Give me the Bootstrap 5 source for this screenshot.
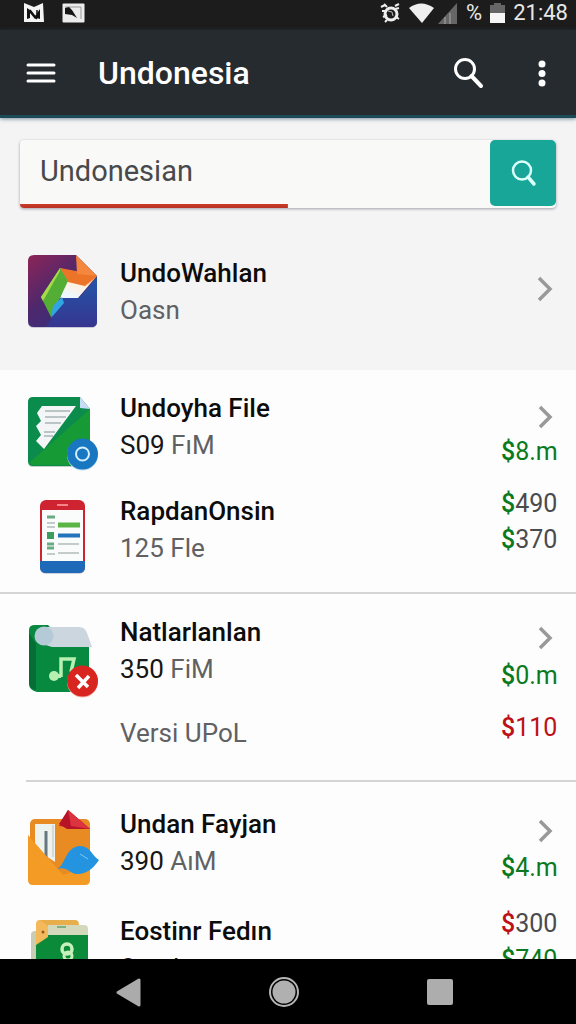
<!DOCTYPE html>
<html lang="id">
<head>
<meta charset="utf-8">
<meta name="viewport" content="width=device-width, initial-scale=1">
<title>Undonesia</title>
<link rel="stylesheet" href="https://cdn.jsdelivr.net/npm/bootstrap@5.3.0/dist/css/bootstrap.min.css">
<style>
  body { font-family: Roboto, "Liberation Sans", sans-serif; background: #fdfdfd; color: #0c0c0c; }
  svg { display: block; flex: none; }
  .status-bar { height: 30px; background: #1d1c1c; color: #e8e8e8; padding: 0 8px 4px 22px; font-size: 22px; line-height: 26px; }
  .app-bar { height: 88px; background: #252b2f; border-bottom: 3px solid #1b4b57; box-shadow: 0 1px 4px rgba(40, 80, 100, .6); padding: 0 20px 0 24px; z-index: 1; }
  .app-bar h1 { font-size: 32px; line-height: 40px; font-weight: 500; color: #fff; margin-left: 40px; }
  .app-bar button, .nav-keys button { background: none; border: 0; padding: 0; }
  .more-key { margin-left: 42px; }
  .top-area { background: #f4f4f5; padding: 22px 20px 31px; }
  .search-box { height: 68px; background: #f9f9f7; border-radius: 4px; box-shadow: 0 1px 3px rgba(60, 60, 80, .45); margin-bottom: 43px; }
  .search-box input { background: linear-gradient(#cb3c28, #b83224) left bottom / 57% 4px no-repeat; border: 0; outline: 0; font-size: 29px; color: #48494b; padding: 0 20px 4px; min-width: 0; border-radius: 4px 0 0 4px; }
  .search-box button { width: 66px; height: 66px; background: #18a699; border: 0; border-radius: 5px; }
  .entry { display: flex; align-items: flex-start; gap: 16px; padding-left: 4px; color: inherit; text-decoration: none; }
  .entry-name { font-size: 26px; line-height: 36px; font-weight: 500; margin: 0; }
  .entry-sub { font-size: 26px; line-height: 38px; margin: 0; color: #606163; }
  .entry-sub b { font-weight: 400; color: #161616; }
  .entry-side { font-size: 25px; line-height: 36px; color: #4b4b4d; width: 55px; white-space: nowrap; }
  .entry-side svg { height: 36px; margin-left: auto; }
  .entry-head .entry-side { padding-top: 8px; }
  .entry-more .entry-text { padding-top: 7px; }
  .entry-plain { padding-left: 100px; }
  .entry-side b { font-weight: 500; }
  .up { color: #0b7a1e; }
  .down { color: #bd1118; }
  .file-group { padding: 20px 20px 18px; display: grid; gap: 8px; }
  .file-group-loose { padding: 24px 20px 18px; gap: 12px; }
  .rule-full { border-bottom: 2px solid #d3d4d6; }
  .rule-inset { height: 2px; background: #d3d4d6; margin-left: 26px; }
  .nav-keys { height: 65px; background: #000; padding: 0 58px 0 50px; }
</style>
</head>
<body>
<div class="d-flex flex-column vh-100 overflow-hidden">
  <div class="status-bar d-flex align-items-center flex-shrink-0">
    <svg width="24" height="22" viewBox="0 0 24 22"><path d="M2 1l10 4 9-4 1 19H2z" fill="#f4f4f4"/><path d="M5 6l3 2 5 6 5-7v10l-3-1-2 1-5-6v5l-3 1z" fill="#111"/><path d="M8 8l7 9M15 8v4" fill="none" stroke="#111" stroke-width="1.500"/></svg>
    <svg class="ms-3" width="24" height="20" viewBox="0 0 24 20"><rect x=".5" y=".5" width="22" height="19" rx="1" fill="#ececec"/><path d="M3 4h16v12" fill="none" stroke="#999"/><path d="M3 5l4-1 3 3 5 8-5-3-7-1z" fill="#161616"/></svg>
    <svg class="ms-auto" width="21" height="22" viewBox="0 0 21 22"><circle cx="11" cy="12" r="6" fill="none" stroke="#eee" stroke-width="3"/><path d="M1 5l4-2M4 2l3 3M15 4l4-2M15 7l4-1M2 9h4M3 15l4-2M16 15l3 2M7 18l-2 2" stroke="#eee" stroke-width="2"/><path d="M8 9l4 1 1 4" stroke="#bbb" fill="none"/></svg>
    <svg class="ms-2" width="25" height="20" viewBox="0 0 25 20"><path d="M0 5Q12-4 25 5L13 20z" fill="#eee"/></svg>
    <svg class="ms-1" width="20" height="21" viewBox="0 0 20 21"><path d="M19 0v21H0z" fill="#666"/><path d="M7 14v7M12 10v11" stroke="#aaa"/></svg>
    <span class="ms-2">%</span>
    <svg class="ms-2" width="15" height="20" viewBox="0 0 15 20"><path d="M4 0h7v2h4v9H0V2h4z" fill="#666"/><path d="M0 10h15v10H0z" fill="#f6f6f6"/></svg>
    <span class="ms-2">21:48</span>
  </div>

  <header class="app-bar d-flex align-items-center flex-shrink-0">
    <button type="button" aria-label="Menu"><svg width="34" height="24" viewBox="0 0 34 24"><path d="M4 4h26M4 12h26M4 20h26" stroke="#fff" stroke-width="3" stroke-linecap="round"/></svg></button>
    <h1 class="mb-0">Undonesia</h1>
    <button type="button" class="ms-auto" aria-label="Search"><svg width="34" height="34" viewBox="0 0 34 34"><circle cx="13" cy="13" r="9.500" fill="none" stroke="#fff" stroke-width="3"/><path d="M19.500 20l9.500 10" stroke="#fff" stroke-width="4" stroke-linecap="round"/></svg></button>
    <button type="button" class="more-key" aria-label="More options"><svg width="28" height="30" viewBox="0 0 28 30"><g fill="#fff"><circle cx="14" cy="6" r="3.500"/><circle cx="14" cy="15.500" r="3.500"/><circle cx="14" cy="25" r="3.500"/></g></svg></button>
  </header>

  <main class="flex-grow-1 overflow-hidden">
    <section class="top-area">
      <form class="search-box d-flex" role="search">
        <input class="flex-grow-1" type="text" value="Undonesian" aria-label="Search files">
        <button type="button" class="d-flex align-items-center justify-content-center" aria-label="Search"><svg width="28" height="28" viewBox="0 0 28 28"><circle cx="13" cy="11.500" r="9" fill="none" stroke="#dcfffa" stroke-width="2.500"/><path d="M19 18l6 7" stroke="#dcfffa" stroke-width="3.500" stroke-linecap="round"/></svg></button>
      </form>
      <a class="entry" href="#">
        <svg width="80" height="88" viewBox="24 251 80 88">
          <defs><linearGradient id="dusk" x1="0" y1="0" x2=".8" y2="1"><stop offset="0" stop-color="#8d2457"/><stop offset=".5" stop-color="#4d286d"/><stop offset="1" stop-color="#303183"/></linearGradient><linearGradient id="sea" x1="0" y1="0" x2="0" y2="1"><stop stop-color="#2257a8"/><stop offset="1" stop-color="#36358f"/></linearGradient><linearGradient id="glow" x1=".8" y1="0" x2=".4" y2="1"><stop stop-color="#f06b21"/><stop offset=".6" stop-color="#fff0e0"/><stop offset="1" stop-color="#eef9ff"/></linearGradient></defs>
          <path d="M34 256h42l21 22v44q0 6-6 6H34q-6 0-6-6v-60q0-6 6-6z" fill="#c8c8d6"/>
          <path d="M34 255h42l21 21v45q0 6-6 6H34q-6 0-6-6v-60q0-6 6-6z" fill="url(#dusk)"/>
          <path d="M97 277v44q0 6-6 6H46l6-9 11-20h16z" fill="url(#sea)"/>
          <path d="M60 268l16 6 21 2-19 22H60l6-17z" fill="url(#glow)"/>
          <path d="M60 268l16 3 21 5-12 10-17-4z" fill="#ec7428"/>
          <path d="M60 268l8 13-17 36-10-20z" fill="#54ad34"/><path d="M60 268l-19 29 2 4 17-30z" fill="#a8d84c"/>
          <path d="M62 297l2 6-13 15 2-12z" fill="#30a5e5"/>
          <path d="M76 255l21 21-20-2z" fill="#f4873d"/>
        </svg>
        <div class="entry-text flex-grow-1 pt-1">
          <h2 class="entry-name">UndoWahlan</h2>
          <p class="entry-sub">Oasn</p>
        </div>
        <div class="entry-side pt-3 mt-1"><svg width="20" height="36" viewBox="0 0 20 36"><path d="M3 7l11 11L3 29" fill="none" stroke="#999" stroke-width="3.500"/></svg></div>
      </a>
    </section>

    <section class="file-group rule-full">
      <a class="entry entry-head" href="#">
        <svg width="80" height="88" viewBox="24 390 80 88">
          <path d="M33 398h47l10 12v52q0 5-5 5H33q-5 0-5-5v-59q0-5 5-5z" fill="#bcd3c5"/>
          <path d="M33 397h47l10 12v52q0 5-5 5H33q-5 0-5-5v-59q0-5 5-5z" fill="#0b8c4c"/>
          <path d="M90 409v52q0 4-4 4H33l-4-2z" fill="#159a35"/>
          <path d="M80 397l10 12-10-1z" fill="#c7dcf5"/>
          <path d="M42 406h34l-32 43-8-8 5-6-5-9 5-5-4-8z" fill="#f3f5f6"/>
          <path d="M45 411h25M45 417h21M45 423h16M44 432h11M44 436h9" stroke="#a9b5b8" stroke-width="1.500"/>
          <circle cx="82.500" cy="455" r="15.500" fill="#c4dded"/><circle cx="82.500" cy="454" r="15.500" fill="#1977c2"/><circle cx="82.500" cy="454" r="6.500" fill="none" stroke="#d2efff" stroke-width="2"/>
        </svg>
        <div class="entry-text flex-grow-1">
          <h2 class="entry-name">Undoyha File</h2>
          <p class="entry-sub"><b>S09</b> FıM</p>
        </div>
        <div class="entry-side"><svg width="20" height="36" viewBox="0 0 20 36"><path d="M4 9l10 10L4 29" fill="none" stroke="#999" stroke-width="3.500"/></svg><span class="up"><b>$</b>8.m</span></div>
      </a>
      <div class="entry entry-more">
        <svg width="80" height="88" viewBox="24 486 80 88">
          <rect x="40" y="501" width="45" height="73" rx="6" fill="#ccd2da"/>
          <rect x="40" y="500" width="45" height="73" rx="6" fill="#ce2431"/>
          <path d="M40 561h45v6q0 6-6 6H46q-6 0-6-6z" fill="#1e69b8"/>
          <path d="M42 510h41v51H42z" fill="#fafcfc"/><path d="M57 505h11" stroke="#ffa5a5" stroke-width="1.500"/>
          <path d="M47 517h8M47 544h7M47 548h7" stroke="#69aa83" stroke-width="3"/><path d="M47 523h8M47 527h8M47 554h8M58 544h21M58 553h21" stroke="#c4cbcb" stroke-width="2"/>
          <path d="M58 525h22" stroke="#5bb545" stroke-width="5"/><path d="M58 535.500h22" stroke="#2374bb" stroke-width="4"/><rect x="47" y="532" width="7" height="7" fill="#3c9b5f"/>
        </svg>
        <div class="entry-text flex-grow-1">
          <h2 class="entry-name">RapdanOnsin</h2>
          <p class="entry-sub">125 Fle</p>
        </div>
        <div class="entry-side"><div><b class="up">$</b>490</div><div><b class="up">$</b>370</div></div>
      </div>
    </section>

    <section class="file-group pb-4">
      <a class="entry entry-head" href="#">
        <svg width="80" height="88" viewBox="24 614 80 88">
          <path d="M29 630q0-5 6-5h13l8 8 33 10v45q0 4-4 4H37q-8-2-8-8z" fill="#07893f"/><path d="M29 633l7 11v46q-6-1-7-7z" fill="#046e35"/>
          <path d="M41 627h38q6 0 8 6l5 14H52l-13-4z" fill="#cbd6df"/><circle cx="44" cy="636" r="9.500" fill="#b4cbd7"/>
          <path d="M61 677v-18h13l-3 13" fill="none" stroke="#b7f0b0" stroke-width="3.500"/><circle cx="54" cy="676" r="5" fill="#b7f0b0"/><path d="M54 676h7" stroke="#b7f0b0" stroke-width="4"/>
          <circle cx="82.500" cy="682" r="15.500" fill="#f4b5ac"/><circle cx="82.500" cy="681" r="15.500" fill="#d9251f"/><path d="M76 675l12 12M89 676l-11 12" stroke="#fff" stroke-width="3.500"/>
        </svg>
        <div class="entry-text flex-grow-1">
          <h2 class="entry-name">Natlarlanlan</h2>
          <p class="entry-sub"><b>350</b> FiM</p>
        </div>
        <div class="entry-side"><svg width="20" height="36" viewBox="0 0 20 36"><path d="M4 6l10 10L4 26" fill="none" stroke="#999" stroke-width="3.500"/></svg><span class="up"><b>$</b>0.m</span></div>
      </a>
      <div class="entry entry-plain pb-1">
        <p class="entry-sub flex-grow-1 pt-1">Versi UPoL</p>
        <div class="entry-side down"><b>$</b>110</div>
      </div>
    </section>
    <div class="rule-inset"></div>

    <section class="file-group file-group-loose">
      <a class="entry entry-head" href="#">
        <svg width="80" height="88" viewBox="24 806 80 88">
          <rect x="30" y="819" width="60" height="65" rx="5" fill="#e88b22"/>
          <path d="M35 824h20v38l-12-8-8-9z" fill="#eef2ee"/><path d="M46 831v27" stroke="#657780" stroke-width="3"/><path d="M53 825v32" stroke="#bcc3bc"/>
          <path d="M28 835l35 40 27-10v15q0 5-5 5H33q-5 0-5-5z" fill="#f39b25"/>
          <path d="M68 810l22 19-31-3z" fill="#ce1e2c"/><path d="M68 810l-9 14 8 5h23z" fill="#b71527"/><path d="M68 810l22 19-19-3z" fill="#dc3340"/>
          <path d="M57 869c8-3 8-21 22-23 11-1 13 10 20 14-6 9-14 15-23 14-7-1-9-8-19-5z" fill="#2493e0"/><path d="M80 854l8 5" stroke="#7cc9f2"/>
        </svg>
        <div class="entry-text flex-grow-1">
          <h2 class="entry-name">Undan Fayjan</h2>
          <p class="entry-sub"><b>390</b> AıM</p>
        </div>
        <div class="entry-side"><svg width="20" height="36" viewBox="0 0 20 36"><path d="M4 7l10 10L4 27" fill="none" stroke="#999" stroke-width="3.500"/></svg><span class="up"><b>$</b>4.m</span></div>
      </a>
      <div class="entry entry-more">
        <svg width="80" height="88" viewBox="24 906 80 88">
          <rect x="31" y="931" width="50" height="58" rx="4" fill="#c9cdb5"/>
          <path d="M39 920h36q4 0 4 5v50H36v-51z" fill="#e9ae4c"/>
          <path d="M48 925h36q4 0 4 4v48H48z" fill="#d5d9bc"/><path d="M36 944l12-9h40v54H36z" fill="#0b8b3a"/>
          <path d="M36 924q0-4 4-4l8 6v11l-12 8z" fill="#f4b95b"/><circle cx="43" cy="932" r="1.500" fill="#8f5b22"/><path d="M57 927h9" stroke="#61a36c" stroke-width="1.500"/>
          <circle cx="67" cy="949" r="5" fill="none" stroke="#c8f0bd" stroke-width="3.500"/><circle cx="68" cy="956" r="4" fill="none" stroke="#c8f0bd" stroke-width="3"/>
        </svg>
        <div class="entry-text flex-grow-1">
          <h2 class="entry-name">Eostinr Fedın</h2>
          <p class="entry-sub"><b>Sondar</b></p>
        </div>
        <div class="entry-side"><div><b class="down">$</b>300</div><div class="up"><b>$</b>740</div></div>
      </div>
    </section>
  </main>

  <nav class="nav-keys row g-0 flex-shrink-0 align-items-center" aria-label="System">
    <div class="col d-flex justify-content-center"><button type="button" aria-label="Back"><svg width="26" height="32" viewBox="0 0 26 32"><path d="M24 4v25L3 16.500z" fill="#ababab" stroke="#ababab" stroke-width="3" stroke-linejoin="round"/></svg></button></div>
    <div class="col d-flex justify-content-center"><button type="button" aria-label="Home"><svg width="32" height="32" viewBox="0 0 32 32"><circle cx="16" cy="16" r="14" fill="none" stroke="#b5b5b5" stroke-width="2"/><circle cx="16" cy="16" r="11.500" fill="#b0b0b0"/></svg></button></div>
    <div class="col d-flex justify-content-center"><button type="button" aria-label="Recent apps"><svg width="26" height="26" viewBox="0 0 26 26"><rect width="26" height="26" rx="2" fill="#adadad"/></svg></button></div>
  </nav>
</div>
<script src="https://cdn.jsdelivr.net/npm/bootstrap@5.3.0/dist/js/bootstrap.bundle.min.js"></script>
</body>
</html>
